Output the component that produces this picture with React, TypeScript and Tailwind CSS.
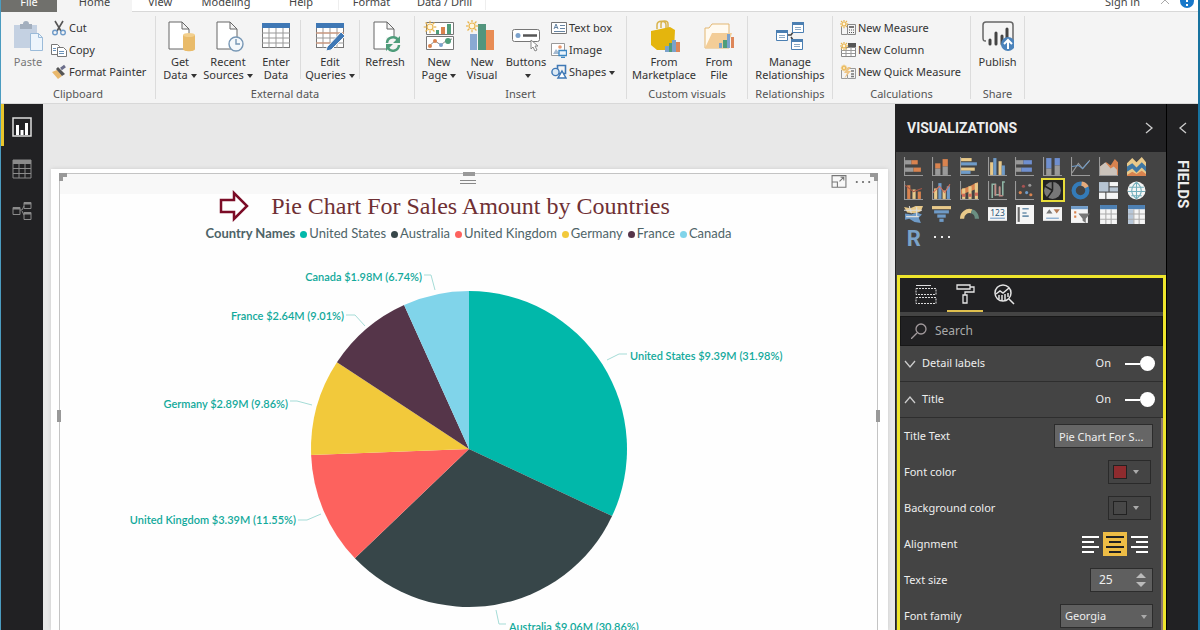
import { useState } from "react";
import type { ReactNode } from "react";

type Box = [number, number, number, number, string];

const O = "#d9834f";
const B = "#6f9bc8";
const Y = "#e8c98a";
const G = "#9a9a9a";
const W = "#f5f5f5";

function Svg({ size = 32, box = 32, children }: { size?: number; box?: number; children: ReactNode }) {
  return (
    <svg width={size} height={size} viewBox={`0 0 ${box} ${box}`} fill="none" className="shrink-0" aria-hidden="true">
      {children}
    </svg>
  );
}

function Boxes({ list }: { list: Box[] }) {
  return (
    <>
      {list.map(([x, y, w, h, fill], i) => (
        <rect key={i} x={x} y={y} width={w} height={h} fill={fill} />
      ))}
    </>
  );
}

const sun = (x: number, y: number, r: number) => (
  <g stroke="#e9b44c" strokeWidth="1.2">
    <circle cx={x} cy={y} r={r * 0.5} fill="#fff6df" />
    {[0, 45, 90, 135, 180, 225, 270, 315].map((a) => (
      <path key={a} d={`M${x + r * 0.65} ${y}h${r * 0.4}`} transform={`rotate(${a} ${x} ${y})`} />
    ))}
  </g>
);

/* Ribbon icons, 32px */
const page = <path d="M5 2h13l7 7v20H5zM18 2v7h7" fill="#fff" stroke="#666" />;

const grid = (
  <>
    <rect x="2.5" y="3.5" width="27" height="24" fill="#fff" stroke="#777" />
    <rect x="2" y="3" width="28" height="5" fill="#3f78b5" />
    <path d="M2 13h28M2 18h28M2 23h28M9 8v20M16 8v20M23 8v20" stroke="#999" />
  </>
);

const icons = {
  paste: (
    <Svg>
      <rect x="2" y="5" width="23" height="23" fill="#c4d1e2" />
      <path d="M8 4h3a3 3 0 0 1 6 0h3v5H8z" fill="#a3afbe" />
      <path d="M18.500 13.500h8l4 4v13h-12z" fill="#edf5fc" stroke="#9bbbd9" />
      <path d="M26.500 13.500v4h4" stroke="#9bbbd9" />
    </Svg>
  ),
  getData: (
    <Svg>
      {page}
      <path d="M19 15v14c0 3 12 3 12 0V15z" fill="#e9bb6a" />
      <ellipse cx="25" cy="15" rx="6" ry="2" fill="#f2cf8d" />
    </Svg>
  ),
  recent: (
    <Svg>
      {page}
      <circle cx="24" cy="24" r="7" fill="#f5f8fb" stroke="#7797b5" strokeWidth="1.400" />
      <path d="M24 19v5h4" stroke="#7797b5" strokeWidth="1.400" />
    </Svg>
  ),
  enter: <Svg>{grid}</Svg>,
  edit: (
    <Svg>
      {grid}
      <path d="M2 13h28M2 23h20" stroke="#dc9471" />
      <path d="M13 27 27 12l4 4-14 14-5 1z" fill="#3f78b5" stroke="#f4f4f4" />
    </Svg>
  ),
  refresh: (
    <Svg>
      {page}
      <rect x="17" y="17" width="15" height="14" fill="#f4f4f4" />
      <path d="M18 23a6 6 0 0 1 11-3M30 25a6 6 0 0 1-11 3" stroke="#4f9d7b" strokeWidth="2.500" />
      <path d="M31 16v7h-7zM17 31v-7h7z" fill="#4f9d7b" />
    </Svg>
  ),
  newPage: (
    <Svg>
      <path d="M3.500 16.500h27v13h-27zM30.500 14.500h-27v-12h27z" fill="#fff" stroke="#777" />
      <Boxes list={[[13, 10, 3, 4, "#4f9d7b"], [18, 7, 4, 7, "#d9834f"], [24, 4, 4, 10, "#4f9d7b"]]} />
      <path d="m6 26 6-5 6 4 6-5 5-1" stroke="#888" />
      <circle cx="12" cy="21" r="2" fill={O} />
      <circle cx="18" cy="25" r="2" fill="#7ba2cc" />
      <circle cx="25" cy="21" r="3" fill="#4f9d7b" />
      <circle cx="7" cy="26" r="2" fill={O} />
      {sun(7, 7, 6)}
    </Svg>
  ),
  newVisual: (
    <Svg>
      <Boxes list={[[4, 14, 7, 16, "#89a9d2"], [12, 4, 8, 26, "#52957d"], [20, 10, 8, 20, "#e88c54"]]} />
      {sun(6, 6, 6)}
    </Svg>
  ),
  buttons: (
    <Svg>
      <rect x="2.500" y="9.500" width="27" height="12" rx="2" fill="#fff" stroke="#777" />
      <circle cx="8" cy="15.500" r="2.500" fill="#7ba2cc" />
      <path d="M13 15.500h14" stroke="#555" strokeWidth="2.500" />
      <path d="M21 20v9l2-2 2 4 2-1-2-4h3z" fill="#fff" stroke="#888" />
    </Svg>
  ),
  market: (
    <Svg>
      <path d="M9 9V5c0-5 9-5 9 0v4M13 8V4c0-4 7-4 7 0v4" stroke="#d8b34c" strokeWidth="1.500" />
      <path d="M3 11 22 7l5 3-1 20H9l-6-5z" fill="#e4b50d" />
      <Boxes list={[[17, 26, 4, 6, "#7ba2cc"], [21, 23, 3, 9, "#4f9d7b"], [24, 20, 4, 12, "#7ba2cc"], [28, 22, 4, 10, "#dd8659"]]} />
    </Svg>
  ),
  file: (
    <Svg>
      <path d="M2 28V8h4l3-4h17v24z" fill="#fffaf0" stroke="#e3b772" />
      <path d="m2 28 7-15h20l-5 15z" fill="#f3cd97" />
      <Boxes list={[[16, 23, 3, 5, "#7ba2cc"], [20, 20, 4, 8, "#4f9d7b"], [24, 14, 3, 14, "#7ba2cc"], [28, 17, 3, 11, "#dd8659"]]} />
    </Svg>
  ),
  relations: (
    <Svg>
      <path d="M12 15h5l5-7M17 17l4 6" stroke="#444" strokeWidth="1.500" />
      {[[2, 10], [18, 2], [17, 19]].map(([x, y]) => (
        <g key={x}>
          <path d={`M${x + 0.5} ${y + 0.5}h11v10h-11z`} fill="#fff" stroke="#4b7fb2" />
          <path d={`M${x} ${y + 1.5}h12`} stroke="#4b7fb2" strokeWidth="3" />
          <path d={`M${x + 3} ${y + 5.5}h6M${x + 3} ${y + 7.5}h6`} stroke="#8ba9c5" />
        </g>
      ))}
    </Svg>
  ),
  publish: (
    <Svg>
      <path d="M4 21c-3 0-3-1-3-4V5c0-2 1-3 3-3h24c2 0 3 1 3 3v15" stroke="#666" strokeWidth="1.500" />
      <path d="M8 20v4M14 13v11M20 16v8M25 9v9" stroke="#444" strokeWidth="3" strokeLinecap="round" />
      <circle cx="26" cy="24" r="7" fill="#4b83bb" />
      <path d="M26 29v-9m-4 4 4-4 4 4" stroke="#fff" strokeWidth="2" />
    </Svg>
  ),
};

/* Ribbon icons, 16px */
const small = {
  cut: (
    <Svg size={16} box={16}>
      <path d="m4 1 6 10M12 1 6 11" stroke="#555" strokeWidth="1.600" />
      <circle cx="4" cy="12.500" r="2.300" stroke="#6f9bc8" strokeWidth="1.400" />
      <circle cx="12" cy="12.500" r="2.300" stroke="#6f9bc8" strokeWidth="1.400" />
    </Svg>
  ),
  copy: (
    <Svg size={16} box={16}>
      <path d="M.500 2.500h6l2 2v8h-8z" fill="#fff" stroke="#777" />
      <path d="M6.500 5.500h6l3 3v6h-9z" fill="#fff" stroke="#777" />
      <path d="M2 6.500h3M2 8.500h3M8 9.500h5M8 11.500h5" stroke="#6b93ba" />
    </Svg>
  ),
  painter: (
    <Svg size={16} box={16}>
      <path d="m1 8 5-2 5 6-4 3z" fill="#e9b86c" />
      <path d="m5 5 2-2 7 7-3 2z" fill="#555" />
      <path d="m10 5 4-3" stroke="#6a6d8a" strokeWidth="3" />
    </Svg>
  ),
  text: (
    <Svg size={16} box={16}>
      <path d="M.500 2.500h15v11H.500z" fill="#fff" stroke="#777" />
      <path d="m3 9 2-5 2 5M4 7.500h3M9 5.500h5M9 8.500h5M3 11.500h11" stroke="#6785a3" />
    </Svg>
  ),
  image: (
    <Svg size={16} box={16}>
      <path d="M.500 1.500h13v12H.500z" fill="#fff" stroke="#999" />
      <path d="m2 12 3-5 4 5z" fill="#a5bad0" />
      <circle cx="9" cy="5" r="1.800" fill="#e79970" />
      <path d="M8 8.500h7.500v5H8zM10 15.500h4" fill="#eaf4fd" stroke="#3c87c2" strokeWidth="1.300" />
    </Svg>
  ),
  shapes: (
    <Svg size={16} box={16}>
      <path d="M6.500 1.500h8v8h-8z" stroke="#3f78b5" strokeWidth="1.600" />
      <circle cx="4.500" cy="8" r="3.600" fill="#dceaf6" stroke="#3f78b5" strokeWidth="1.400" />
      <path d="m11 7 4 7H7z" fill="#fff" stroke="#3f78b5" strokeWidth="1.500" />
    </Svg>
  ),
  measure: (
    <Svg size={16} box={16}>
      <path d="M1.500 6v8.500H7M7.500 4.500h8v10h-8z" stroke="#888" />
      <path d="M9 7h5" stroke="#777" strokeWidth="2" />
      <path d="M9 10h1m1 0h1m1 0h1M9 12.500h1m1 0h1m1 0h1" stroke="#555" />
      {sun(4, 4, 4)}
    </Svg>
  ),
  column: (
    <Svg size={16} box={16}>
      <path d="M1.500 5.500h14v9h-14z" fill="#fff" stroke="#888" />
      <path d="M8 1h8v4H8z" fill="#555" />
      <path d="M6 5v9M11 5v9M1 8.500h14M1 11.500h14" stroke="#999" />
      {sun(4, 4, 4)}
    </Svg>
  ),
  quick: (
    <Svg size={16} box={16}>
      <path d="M1.500 6v8.500H7M7.500 4.500h8v10h-8z" stroke="#999" />
      <path d="M11 7h3M11 10h3M11 12.500h3" stroke="#777" strokeWidth="1.400" />
      <path d="m8 3-4 6h3l-3 6 7-8H8l3-4z" fill="#edc486" />
      {sun(4, 4, 3)}
    </Svg>
  ),
};

function Caret() {
  return (
    <svg width="6" height="4" viewBox="0 0 6 4" className="ml-[3px] inline-block align-middle" aria-hidden="true">
      <path d="M0 0h6L3 4z" fill="#333" />
    </svg>
  );
}

function BigButton({ icon, lines, caret, width, muted }: { icon: ReactNode; lines: string[]; caret?: boolean; width: string; muted?: boolean }) {
  return (
    <button className={`flex shrink-0 flex-col items-center gap-[3px] pt-2 leading-[13px] whitespace-nowrap ${width} ${muted ? "text-[#777]" : ""}`}>
      {icon}
      <span>
        {lines[0]}
        {(lines[1] || caret) && <br />}
        {lines[1]}
        {caret && <Caret />}
      </span>
    </button>
  );
}

function SmallButton({ icon, label, caret }: { icon: ReactNode; label: string; caret?: boolean }) {
  return (
    <button className="flex h-[22px] items-center gap-[2px] whitespace-nowrap">
      {icon}
      <span>
        {label}
        {caret && <Caret />}
      </span>
    </button>
  );
}

function Group({ title, width, children }: { title: string; width: string; children: ReactNode }) {
  return (
    <section className={`my-1 shrink-0 border-r border-[#dcdcdc] ${width}`}>
      <div className="-mt-1 flex h-[75px]">{children}</div>
      <h2 className="text-center leading-[14px] text-[#555]">{title}</h2>
    </section>
  );
}

function Ribbon() {
  return (
    <div className="flex h-[92px] shrink-0 border-b border-[#d8d8d8] bg-[#f4f4f4] text-[11px] text-[#333]">
      <Group title="Clipboard" width="w-[155px]">
        <BigButton icon={icons.paste} lines={["Paste"]} width="ml-1 w-[46px]" muted />
        <div className="pt-[5px]">
          <SmallButton icon={small.cut} label="Cut" />
          <SmallButton icon={small.copy} label="Copy" />
          <SmallButton icon={small.painter} label="Format Painter" />
        </div>
      </Group>
      <Group title="External data" width="w-[259px]">
        <BigButton icon={icons.getData} lines={["Get", "Data"]} caret width="w-12" />
        <BigButton icon={icons.recent} lines={["Recent", "Sources"]} caret width="w-12" />
        <BigButton icon={icons.enter} lines={["Enter", "Data"]} width="w-12" />
        <div className="my-2 w-px bg-[#dcdcdc]" />
        <BigButton icon={icons.edit} lines={["Edit", "Queries"]} caret width="w-[58px]" />
        <div className="my-2 w-px bg-[#dcdcdc]" />
        <BigButton icon={icons.refresh} lines={["Refresh"]} width="w-[50px]" />
      </Group>
      <Group title="Insert" width="w-[212px]">
        <BigButton icon={icons.newPage} lines={["New", "Page"]} caret width="w-12" />
        <BigButton icon={icons.newVisual} lines={["New", "Visual"]} width="w-[38px]" />
        <BigButton icon={icons.buttons} lines={["Buttons"]} caret width="w-[50px]" />
        <div className="pt-[5px]">
          <SmallButton icon={small.text} label="Text box" />
          <SmallButton icon={small.image} label="Image" />
          <SmallButton icon={small.shapes} label="Shapes" caret />
        </div>
      </Group>
      <Group title="Custom visuals" width="w-[121px]">
        <BigButton icon={icons.market} lines={["From", "Marketplace"]} width="ml-1 w-[66px]" />
        <BigButton icon={icons.file} lines={["From", "File"]} width="w-[44px]" />
      </Group>
      <Group title="Relationships" width="w-[85px]">
        <BigButton icon={icons.relations} lines={["Manage", "Relationships"]} width="w-[84px]" />
      </Group>
      <Group title="Calculations" width="w-[138px]">
        <div className="pt-[5px] pl-[7px]">
          <SmallButton icon={small.measure} label="New Measure" />
          <SmallButton icon={small.column} label="New Column" />
          <SmallButton icon={small.quick} label="New Quick Measure" />
        </div>
      </Group>
      <Group title="Share" width="w-[54px]">
        <BigButton icon={icons.publish} lines={["Publish"]} width="w-[53px]" />
      </Group>
    </div>
  );
}

function TabBar() {
  return (
    <nav className="flex h-3 shrink-0 items-end bg-white text-[11px] leading-4 whitespace-nowrap text-[#444]">
      <a href="#file" className="w-14 bg-[#70706c] pb-[2px] text-center text-white">File</a>
      <a href="#home" className="w-[75px] bg-[#f4f4f4] pb-[2px] text-center">Home</a>
      <div className="flex flex-1 justify-between border-b border-[#d8d8d8] pb-px">
        <div className="flex">
          <a href="#view" className="w-14 text-center">View</a>
          <a href="#modeling" className="w-[76px] text-center">Modeling</a>
          <a href="#help" className="w-[74px] text-center">Help</a>
          <a href="#format" className="w-[66px] border-l border-[#eee] text-center">Format</a>
          <a href="#drill" className="w-[82px] border-r border-[#eee] text-center">Data / Drill</a>
        </div>
        <div className="flex items-end gap-5 pr-1">
          <a href="#signin">Sign in</a>
          <div className="flex items-end gap-[10px]">
            <Svg size={10} box={10}>
              <path d="m1 4 4-4 4 4" stroke="#aaa" />
            </Svg>
            <Svg size={14} box={14}>
              <circle cx="7" cy="5" r="7" fill="#1979ca" />
              <path d="M7 0v6M7 8v2" stroke="#fff" strokeWidth="2" />
            </Svg>
          </div>
        </div>
      </div>
    </nav>
  );
}

function ViewRail() {
  return (
    <nav className="w-[42px] shrink-0 bg-[#212123]">
      <button aria-label="Report" className="flex h-[42px] w-full items-center border-l-[3px] border-[#e8c52c] pt-1 pl-2">
        <Svg size={20} box={20}>
          <path d="M1 1h18v18H1z" stroke="#ddd" strokeWidth="1.500" />
          <path d="M5.500 18V8M10 18v-5M14.500 18V6" stroke="#fff" strokeWidth="3" />
        </Svg>
      </button>
      <button aria-label="Data" className="flex h-[42px] w-full items-center pt-1 pl-[11px]">
        <Svg size={20} box={20}>
          <path d="M1 1h18v18H1zM1 9.500h18M1 14.500h18M7 4v15M13 4v15" stroke="#8b8b8b" />
          <path d="M1 1h18v4H1z" fill="#8b8b8b" />
        </Svg>
      </button>
      <button aria-label="Model" className="flex h-[42px] w-full items-center pt-1 pl-[11px]">
        <Svg size={20} box={20}>
          <path d="M1 6.500h7v7H1zM12 1.500h7v6h-7zM12 11.500h7v7h-7zM8 9h2l2-4M10 10l2 4" stroke="#8b8b8b" />
          <path d="M1 7.500h7M12 2.500h7M12 12.500h7" stroke="#8b8b8b" strokeWidth="2" />
        </Svg>
      </button>
    </nav>
  );
}

const slices = [
  { name: "United States", pct: 31.98, color: "#01b8aa" },
  { name: "Australia", pct: 30.86, color: "#374649" },
  { name: "United Kingdom", pct: 11.55, color: "#fd625e" },
  { name: "Germany", pct: 9.86, color: "#f2c93b" },
  { name: "France", pct: 9.01, color: "#553549" },
  { name: "Canada", pct: 6.74, color: "#80d4ea" },
];

const labels = [
  { text: "United States $9.39M (31.98%)", x: 161, y: -89, end: false, line: "M138 -89 150 -95H158" },
  { text: "Australia $9.06M (30.86%)", x: 40, y: 182, end: false, line: "M27 161 30 175H37" },
  { text: "United Kingdom $3.39M (11.55%)", x: -173, y: 75, end: true, line: "M-148 65-162 71H-171" },
  { text: "Germany $2.89M (9.86%)", x: -181, y: -41, end: true, line: "M-157 -44-172 -48H-179" },
  { text: "France $2.64M (9.01%)", x: -125, y: -129, end: true, line: "M-104 -123-114 -134H-123" },
  { text: "Canada $1.98M (6.74%)", x: -47, y: -168, end: true, line: "M-34 -159-38 -174H-45" },
];

function PieChart() {
  const r = 158;
  let total = 0;
  const paths = slices.map((s) => {
    const a = (total / 100) * Math.PI * 2;
    total += s.pct;
    const b = (total / 100) * Math.PI * 2;
    return `M0 0L${r * Math.sin(a)} ${-r * Math.cos(a)}A${r} ${r} 0 0 1 ${r * Math.sin(b)} ${-r * Math.cos(b)}Z`;
  });
  return (
    <svg
      width="800"
      height="390"
      viewBox="-400 -199 800 390"
      className="mx-auto mt-[6px] max-w-full font-['Comic_Sans_MS','Lato',sans-serif] text-[11px] font-semibold"
      role="img"
      aria-label="Sales amount by country"
    >
      {slices.map((s, i) => (
        <path key={s.name} d={paths[i]} fill={s.color} />
      ))}
      {labels.map((l) => (
        <g key={l.text}>
          <path d={l.line} fill="none" stroke="#a5dcd7" />
          <text x={l.x} y={l.y} textAnchor={l.end ? "end" : "start"} fill="#12a99b">{l.text}</text>
        </g>
      ))}
    </svg>
  );
}

function Canvas() {
  return (
    <main className="min-w-0 flex-1 bg-[#e8e8e8] pt-[65px] pr-[7px] pl-2">
      <div className="h-full bg-white pt-1 pr-[10px] pl-2 shadow-[0_0_4px_#ccc]">
        <article className="relative h-[486px] border border-[#c4c4c4] bg-[#fefefe]">
          <div className="absolute -top-px -left-px h-2 w-2 border-t-4 border-l-4 border-[#999]" />
          <div className="absolute -top-px -right-px h-2 w-2 border-t-4 border-r-4 border-[#999]" />
          <div className="absolute top-[236px] -left-[3px] h-3 w-1 bg-[#999]" />
          <div className="absolute top-[236px] -right-[3px] h-3 w-1 bg-[#999]" />
          <div className="absolute -top-[2px] left-1/2 h-1 w-3 -translate-x-1/2 bg-[#999]" />
          <header className="grid h-5 grid-cols-3 items-start bg-[#f8f8f8]">
            <div className="col-start-2 mx-auto mt-[6px] h-1 w-4 border-y border-[#888]" />
            <div className="flex items-center justify-end gap-2 pr-[6px]">
              <button aria-label="Focus mode">
                <Svg size={16} box={15}>
                  <path d="M1 1.500h13v11H1zM1 7.500h5v5M8 7l4-4M9 3h3v3" stroke="#777" />
                </Svg>
              </button>
              <button aria-label="More options">
                <Svg size={16} box={18}>
                  <path d="M1 9h2M8 9h2M15 9h2" stroke="#777" strokeWidth="2" />
                </Svg>
              </button>
            </div>
          </header>
          <div className="flex h-6 items-center justify-center gap-5 pr-12">
            <svg width="32" height="32" viewBox="0 0 32 32" aria-hidden="true">
              <path d="M2 10h13V3l13 13-13 13v-7H2z" fill="none" stroke="#7b0c26" strokeWidth="2.500" />
            </svg>
            <h1 className="font-['Georgia','Liberation_Serif',serif] text-[24px] leading-6 whitespace-nowrap text-[#6f3034]">
              Pie Chart For Sales Amount by Countries
            </h1>
          </div>
          <ul className="mt-[6px] flex h-5 items-center justify-center gap-[5px] font-['Comic_Sans_MS','Lato',sans-serif] text-[13px] whitespace-nowrap text-[#4e6468]">
            <li className="font-bold">Country Names</li>
            {slices.map((s) => (
              <li key={s.name} className="flex items-center gap-[2px]">
                <span className="h-[7px] w-[7px] rounded-full" style={{ background: s.color }} />
                {s.name}
              </li>
            ))}
          </ul>
          <PieChart />
        </article>
      </div>
    </main>
  );
}

const axis = <path d="M.500 0v17.500H18" stroke={G} />;

/* Gallery of visual types, 18px each */
const visuals: { name: string; art: ReactNode }[] = [
  { name: "Stacked bar", art: <>{axis}<Boxes list={[[1, 3, 6, 4, G], [7, 3, 6, 4, O], [1, 10, 8, 4, G], [9, 10, 7, 4, O]]} /></> },
  { name: "Stacked column", art: <>{axis}<Boxes list={[[3, 6, 5, 5, O], [3, 11, 5, 6, G], [10, 2, 5, 7, O], [10, 9, 5, 8, G]]} /></> },
  { name: "Clustered bar", art: <>{axis}<Boxes list={[[1, 1, 10, 3, Y], [1, 5, 15, 3, B], [1, 10, 13, 3, Y], [1, 13, 9, 3, B]]} /></> },
  { name: "Clustered column", art: <>{axis}<Boxes list={[[2, 5, 3, 12, Y], [5, 1, 3, 16, B], [10, 4, 3, 13, Y], [13, 8, 3, 9, B]]} /></> },
  { name: "Full stacked bar", art: <>{axis}<Boxes list={[[1, 3, 7, 4, G], [8, 3, 8, 4, "#6f8fcf"], [1, 10, 5, 4, G], [6, 10, 10, 4, "#6f8fcf"]]} /></> },
  { name: "Full stacked column", art: <>{axis}<Boxes list={[[3, 1, 5, 10, "#6f8fcf"], [3, 11, 5, 6, G], [11, 1, 5, 7, "#6f8fcf"], [11, 8, 5, 9, G]]} /></> },
  { name: "Line", art: <>{axis}<path d="m1 15 6-9 4 5 7-8" stroke={G} /><path d="m1 9 6-1 4 3 6-7" stroke={B} /></> },
  { name: "Area", art: <>{axis}<path d="M1 17V9l6-4 4 3 4-6 3 3v12z" fill={O} /><path d="m1 17 0-8 5-4 5 6 3-2 3 3v5z" fill="#cbc3bb" /></> },
  { name: "Stacked area", art: <><path d="m0 6 5-5 4 4 5-5 4 5v13H0z" fill={Y} /><path d="m0 9 5-3 4 4 5-5 4 4v5l-4-4-5 5-4-4-5 3z" fill="#3e78a5" /><path d="m0 17 5-3 4 2 5-3 4 3v2H0z" fill={O} /></> },
  { name: "Line and stacked column", art: <>{axis}<Boxes list={[[3, 4, 3, 13, O], [8, 8, 3, 9, Y], [13, 10, 3, 7, O]]} /><path d="m1 4 8 6 8-3" stroke="#a65745" /></> },
  { name: "Line and clustered column", art: <>{axis}<Boxes list={[[2, 7, 3, 10, Y], [6, 2, 3, 15, B], [10, 9, 3, 8, Y], [14, 5, 3, 12, B]]} /><path d="m1 11 6-6 5 6 5-8" stroke="#d7725b" /></> },
  { name: "Ribbon", art: <>{axis}<path d="m1 8 8-3 8-4v6l-8 3-8 3z" fill={O} /><Boxes list={[[2, 7, 3, 10, Y], [8, 5, 3, 12, Y], [14, 2, 3, 15, Y], [2, 12, 3, 3, "#cf6858"], [8, 12, 3, 3, "#cf6858"], [14, 11, 3, 3, "#cf6858"]]} /></> },
  { name: "Waterfall", art: <>{axis}<path d="M4 16V3h3v10h4V6M14 14V1h2" stroke="#8fb5a5" strokeWidth="1.500" /><path d="M7 3v11M11 5v9h3" stroke="#c58a85" strokeWidth="1.500" /></> },
  { name: "Scatter", art: <>{axis}{[[5, 11, O], [8, 5, "#a75352"], [11, 11, B], [14, 4, G], [15, 13, O]].map(([x, y, c], i) => <circle key={i} cx={x} cy={y} r="1.500" fill={String(c)} />)}</> },
  { name: "Pie", art: <><circle cx="9" cy="9" r="8" fill="#777" /><path d="M9 9V1M9 9 2 5M9 9l-5 7" stroke="#222" strokeWidth="1.500" /></> },
  { name: "Donut", art: <><circle cx="9" cy="9" r="6.500" stroke="#347bb8" strokeWidth="4" /><path d="M10 2.500A6.500 6.500 0 0 1 15 6" stroke="#e5aa7b" strokeWidth="4" /></> },
  { name: "Treemap", art: <Boxes list={[[0, 1, 9, 9, "#b6c4d2"], [10, 1, 8, 4, W], [10, 6, 8, 4, "#b6c4d2"], [0, 11, 6, 6, W], [7, 11, 11, 6, W]]} /> },
  { name: "Map", art: <><circle cx="9" cy="9" r="8.500" fill={W} /><path d="M2 6h14M1 10h16M4 14h10M9 1v16M9 1C3 6 3 12 9 17M9 1c6 5 6 11 0 16" stroke="#72aebb" /></> },
  { name: "Filled map", art: <><path d="m0 2 6 1 5-2 7 0-2 5-5 2-8-1z" fill={Y} /><path d="m1 8 6 1 5-2 5 2-3 3 2 5-6-1-5-3-4 1z" fill={B} /><path d="M0 5h17M5 1l2 7M12 2v9M2 11h12" stroke="#ddd" /></> },
  { name: "Funnel", art: <Boxes list={[[0, 1, 18, 3, Y], [2, 5, 14, 3, B], [5, 9, 8, 3, B], [7, 13, 4, 3, B]]} /> },
  { name: "Gauge", art: <><path d="M2 13a7 7 0 0 1 9-7" stroke={Y} strokeWidth="4" /><path d="M11 6a7 7 0 0 1 5 7" stroke="#6a8f82" strokeWidth="4" /></> },
  { name: "Card", art: <><rect x="0" y="2" width="18" height="13" fill={W} /><path d="M2 12.500h14" stroke={B} /><text x="9" y="10" textAnchor="middle" fontSize="8" fill="#2b5878">123</text></> },
  { name: "Multi-row card", art: <><rect x="1" y="0" width="17" height="18" fill={W} /><path d="M3.500 2v14" stroke="#666" strokeWidth="2" /><path d="M7 3.500h6M7 7.500h4M7 10.500h6" stroke="#6d91ad" strokeWidth="1.500" /></> },
  { name: "KPI", art: <><rect x="0" y="2" width="18" height="13" fill={W} /><path d="m3 8 3-4 3 4z" fill="#777" /><path d="m10 4 3 4 3-4z" fill="#b47a55" /><path d="M3 12.500h12" stroke={B} /></> },
  { name: "Slicer", art: <><rect x="0" y="1" width="16" height="16" fill={W} /><path d="M0 2.500h16" stroke={B} strokeWidth="3" /><path d="M3 7h2M3 11h2" stroke={O} strokeWidth="2" /><path d="M7 8h11l-4 5v4l-3-2v-2z" fill="#777" /></> },
  { name: "Table", art: <><rect x="1" y="0" width="16" height="18" fill={W} /><path d="M1 2h16" stroke="#4d80b3" strokeWidth="4" /><path d="M6.500 4v14M11.500 4v14M1 8.500h16M1 13.500h16" stroke="#aaa" /></> },
  { name: "Matrix", art: <><rect x="1" y="0" width="16" height="18" fill={W} /><path d="M1 2h16" stroke="#4d80b3" strokeWidth="4" /><path d="M1 4h5v14H1z" fill="#b7c7d9" /><path d="M6.500 4v14M11.500 4v14M1 8.500h16M1 13.500h16" stroke="#aaa" /></> },
];

function Gallery() {
  return (
    <div className="grid grid-cols-9 gap-y-[2px] py-[3px] pr-4 pl-1">
      {visuals.map((v) => (
        <button
          key={v.name}
          aria-label={v.name}
          className={`mx-auto flex h-[22px] w-[22px] items-center justify-center ${v.name === "Pie" ? "bg-[#222] outline-2 -outline-offset-1 outline-[#e8dd3a]" : ""}`}
        >
          <Svg size={19} box={18}>{v.art}</Svg>
        </button>
      ))}
      <button className="font-['Roboto',sans-serif] text-[22px] leading-6 font-bold text-[#7ba3c8]">R</button>
      <button aria-label="Import visual" className="mx-auto">
        <Svg size={18} box={18}>
          <path d="M1 7h2M8 7h2M15 7h2" stroke="#eee" strokeWidth="2" />
        </Svg>
      </button>
    </div>
  );
}

function ToggleRow({ label, open }: { label: string; open?: boolean }) {
  const [on, setOn] = useState(true);
  return (
    <div className="flex h-9 items-center justify-between border-b border-[#2e2e2e] pr-2 pl-1">
      <button className="flex items-center gap-[6px]">
        <Svg size={12} box={12}>
          <path d={open ? "m1 9 5-6 5 6" : "m1 3 5 6 5-6"} stroke="#ccc" strokeWidth="1.300" />
        </Svg>
        {label}
      </button>
      <label className="flex items-center gap-[14px]">
        {on ? "On" : "Off"}
        <input type="checkbox" aria-label={label} className="sr-only" checked={on} onChange={() => setOn(!on)} />
        <span className={`flex h-4 w-[30px] items-center ${on ? "" : "flex-row-reverse"}`}>
          <span className="h-[2px] flex-1 bg-white" />
          <span className="h-[15px] w-[15px] rounded-full bg-white" />
        </span>
      </label>
    </div>
  );
}

function Row({ label, id, inset, children }: { label: string; id?: string; inset?: boolean; children: ReactNode }) {
  return (
    <div className={`flex h-9 items-center justify-between pl-1 ${inset ? "pr-[10px]" : "pr-2"}`}>
      {id ? <label htmlFor={id}>{label}</label> : <span>{label}</span>}
      {children}
    </div>
  );
}

function ColorButton({ label, fill }: { label: string; fill: string }) {
  return (
    <button aria-label={label} className="flex h-6 w-[43px] items-center gap-[5px] border border-[#2a2a2a] px-1">
      <span className={`h-[14px] w-[14px] border border-[#222] ${fill}`} />
      <Svg size={8} box={8}>
        <path d="M1 2h6L4 6z" fill="#aaa" />
      </Svg>
    </button>
  );
}

const aligns = [
  { name: "Left", d: "M0 2h17M0 7h12M0 12h17M0 17h12" },
  { name: "Center", d: "M0 2h18M3 7h12M0 12h18M3 17h12" },
  { name: "Right", d: "M1 2h17M6 7h12M1 12h17M6 17h12" },
];

function FormatPane() {
  const [text, setText] = useState("Pie Chart For S...");
  const [size, setSize] = useState(25);
  const [align, setAlign] = useState("Center");

  return (
    <section className="ml-px flex-1 border-[3px] border-[#efe62c] bg-[#444]">
      <div className="flex h-[34px] items-end bg-[#212123] pl-2">
        <button aria-label="Fields" className="flex h-[34px] w-9 items-center justify-center">
          <Svg size={22} box={22}>
            <path d="M1 1.500h15" stroke="#ddd" />
            <path d="M1 4.500h20v6H1zM1 13.500h20v6H1z" stroke="#ddd" strokeDasharray="2 1" />
          </Svg>
        </button>
        <button aria-label="Format" className="ml-[3px] flex h-[34px] w-9 items-center justify-center border-b-2 border-[#dfbf4e]">
          <Svg size={22} box={22}>
            <path d="M3 2h13v4H3zM16 4h4v5h-9v3M9 12h4v8H9z" stroke="#e5e5e5" strokeWidth="1.300" />
          </Svg>
        </button>
        <button aria-label="Analytics" className="ml-[3px] flex h-[34px] w-9 items-center justify-center">
          <Svg size={22} box={22}>
            <circle cx="10" cy="9" r="8" stroke="#e5e5e5" strokeWidth="1.500" />
            <path d="m3 10 4-3 3 2 6-5M6 11v4M9 11v6M12 10v6M15 9v4M16 15l5 5" stroke="#e5e5e5" strokeWidth="1.500" />
          </Svg>
        </button>
      </div>
      <label className="mt-1 flex h-[30px] items-center gap-2 border border-[#171717] bg-[#212123] pl-[10px]">
        <Svg size={16} box={16}>
          <circle cx="10" cy="6" r="5" stroke="#a29a9d" strokeWidth="1.300" />
          <path d="m6 10-6 6" stroke="#a29a9d" strokeWidth="1.300" />
        </Svg>
        <input type="search" aria-label="Search" placeholder="Search" className="w-full bg-transparent text-[12px] outline-none placeholder:text-[#aaa]" />
      </label>
      <ToggleRow label="Detail labels" />
      <ToggleRow label="Title" open />
      <div className="border-r-2 border-[#8d786f]">
        <Row label="Title Text" id="title-text">
          <input id="title-text" value={text} onChange={(e) => setText(e.target.value)} className="h-6 w-[99px] border border-[#2c2c2c] bg-[#666] px-1 outline-none" />
        </Row>
        <Row label="Font color" inset>
          <ColorButton label="Font color" fill="bg-[#8e2b2e]" />
        </Row>
        <Row label="Background color" inset>
          <ColorButton label="Background color" fill="bg-[#484848]" />
        </Row>
        <Row label="Alignment" inset>
          <div className="flex">
            {aligns.map((a) => (
              <button
                key={a.name}
                aria-label={a.name}
                onClick={() => setAlign(a.name)}
                className={`flex h-6 w-6 items-center justify-center ${align === a.name ? "bg-[#eebd45] text-[#222]" : "text-white"}`}
              >
                <Svg size={18} box={18}>
                  <path d={a.d} stroke="currentColor" strokeWidth="2" />
                </Svg>
              </button>
            ))}
          </div>
        </Row>
        <Row label="Text size" id="text-size">
          <div className="flex h-6 w-[63px] items-center justify-between border border-[#2c2c2c] bg-[#5f5f5f] pr-[6px] pl-2">
            <input
              id="text-size"
              inputMode="numeric"
              value={size}
              onChange={(e) => setSize(Number(e.target.value) || 0)}
              className="w-7 bg-transparent text-[12px] outline-none"
            />
            <div className="flex flex-col gap-1">
              <button aria-label="Increase" onClick={() => setSize(size + 1)}>
                <svg width="10" height="5" viewBox="0 0 10 5" className="block"><path d="M0 5h10L5 0z" fill="#bbb" /></svg>
              </button>
              <button aria-label="Decrease" onClick={() => setSize(size - 1)}>
                <svg width="10" height="5" viewBox="0 0 10 5" className="block"><path d="M0 0h10L5 5z" fill="#bbb" /></svg>
              </button>
            </div>
          </div>
        </Row>
        <Row label="Font family" id="font-family">
          <div className="relative">
            <select id="font-family" className="h-6 w-[93px] appearance-none border border-[#2c2c2c] bg-[#5f5f5f] px-1 outline-none">
              <option>Georgia</option>
              <option>Arial</option>
            </select>
            <svg width="6" height="4" viewBox="0 0 6 4" className="pointer-events-none absolute top-[11px] right-[6px]">
              <path d="M0 0h6L3 4z" fill="#aaa" />
            </svg>
          </div>
        </Row>
      </div>
    </section>
  );
}

export default function App() {
  return (
    <div className="flex h-screen flex-col overflow-hidden border-r-2 border-l border-r-[#17729f] border-l-[#4b9cc0] bg-white font-['Segoe_UI','Noto_Sans',sans-serif]">
      <TabBar />
      <Ribbon />
      <div className="flex min-h-0 flex-1">
        <ViewRail />
        <Canvas />
        <aside className="flex w-[272px] shrink-0 flex-col border-r border-l border-r-black border-l-[#222] bg-[#444] text-[11px] text-[#eee]">
          <header className="flex h-12 shrink-0 items-center justify-between bg-[#212123] pr-[11px] pl-[11px]">
            <h2 className="font-['Roboto',sans-serif] text-[14px] font-bold">VISUALIZATIONS</h2>
            <Svg size={12} box={12}>
              <path d="m3 1 6 5-6 5" stroke="#ccc" strokeWidth="1.300" />
            </Svg>
          </header>
          <div className="h-[123px] shrink-0">
            <Gallery />
          </div>
          <FormatPane />
        </aside>
        <aside className="flex w-[31px] shrink-0 flex-col items-center bg-[#212123] pt-[18px] text-[#eee]">
          <button aria-label="Expand fields">
            <Svg size={12} box={12}>
              <path d="M9 1 3 6l6 5" stroke="#ccc" strokeWidth="1.300" />
            </Svg>
          </button>
          <h2 className="mt-[26px] font-['Roboto',sans-serif] text-[15px] leading-5 font-bold [writing-mode:vertical-rl]">FIELDS</h2>
        </aside>
      </div>
    </div>
  );
}
